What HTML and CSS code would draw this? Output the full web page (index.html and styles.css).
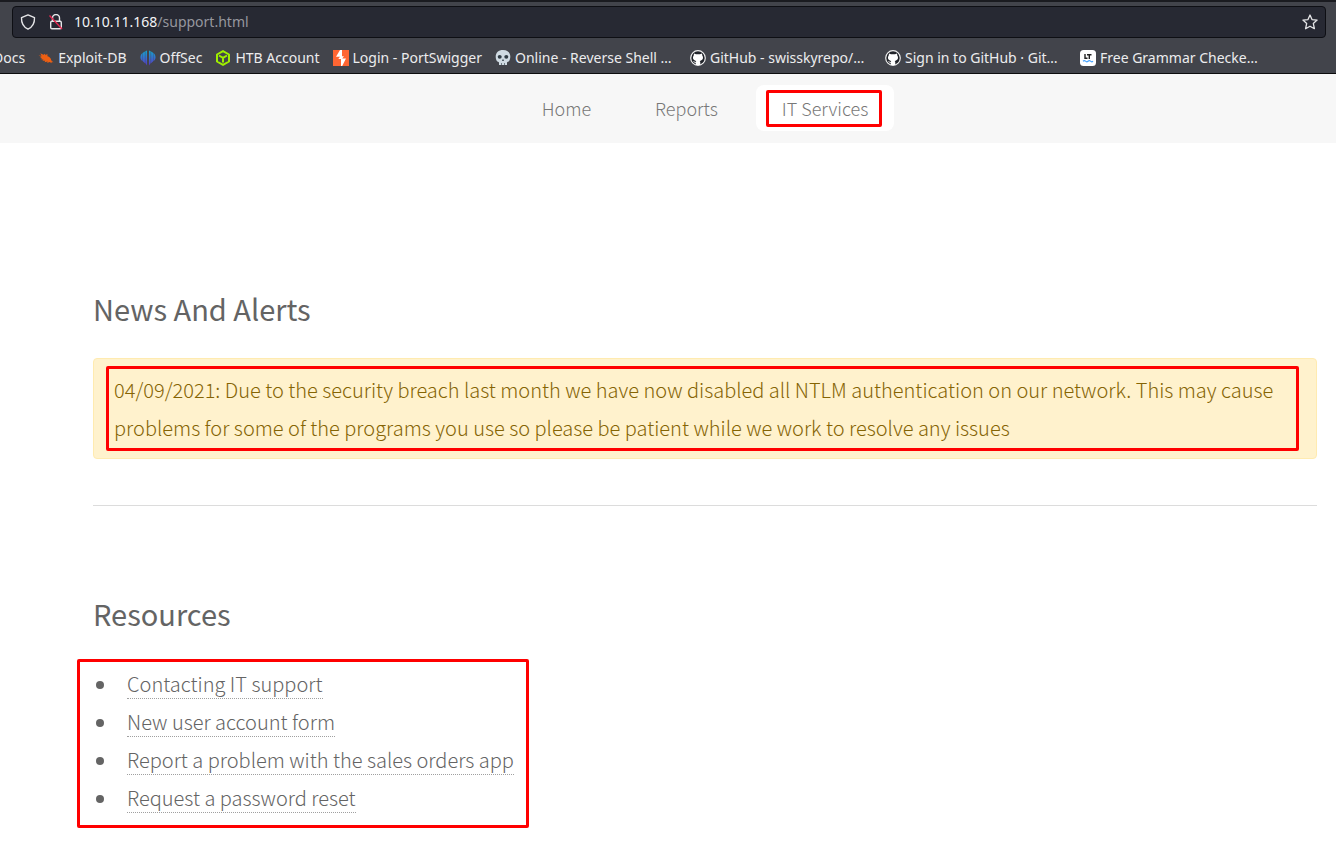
FILE: index.html
```html
<!DOCTYPE html>
<html lang="en">
<head>
<meta charset="utf-8">
<title>Support</title>
<link rel="stylesheet" href="styles.css">
</head>
<body>
<header class="browser">
  <div class="address">
    <svg class="icon" viewBox="0 0 16 16" fill="none" stroke="#e6e6e8" stroke-width="1.4" stroke-linejoin="round"><path d="M8 .9 14.5 3.600C14.700 8.600 12.500 13 8 15.200 3.500 13 1.300 8.600 1.500 3.600Z"/></svg>
    <svg class="icon lock" viewBox="0 0 16 16" fill="none" stroke="#e6e6e8" stroke-width="1.4"><path d="M4.500 7V4a3.500 3.500 0 0 1 7 0v3"/><rect x="2.700" y="7.200" width="10.600" height="7.600" rx="1.200"/><path d="M1.500 1.500 14 15" stroke="#e22850"/></svg>
    <label class="host" for="url">10.10.11.168</label>
    <input class="url" id="url" type="text" value="/support.html">
    <button class="star" type="button" aria-label="Bookmark this page"><svg class="icon" viewBox="0 0 16 16" fill="none" stroke="#e6e6e8" stroke-width="1.300" stroke-linejoin="round"><path d="m8 1 2 4.600 5.100.5-3.800 3.300 1.100 5.300L8 12.200l-4.400 2.500 1.100-5.300L.9 6.100 6 5.600Z"/></svg></button>
  </div>
  <nav class="bookmarks" aria-label="Bookmarks">
    <a href="#">Docs</a>
    <a href="#"><svg class="icon" viewBox="0 0 16 16" fill="#ee5f12"><path d="M.5 5.500 3.500 5.700 2.300 3.200 5.500 4.700 7 3.700l.6 1.500 1.700-1.400.2 2.400c2 .4 3.500 2 3.700 4l2.300 2.300-2.200-.7.7 1.500-2.500-1.200-2.300.8.5-1.300-3.200.6.8-1.400-3-.1 1.300-1L2.300 9l1.900-.6L2 7.300l1.800-.2Z"/></svg>Exploit-DB</a>
    <a href="#"><svg class="icon" viewBox="0 0 16 16"><defs><linearGradient id="off" gradientUnits="userSpaceOnUse" x1="0" y1="0" x2="0" y2="16"><stop stop-color="#10a9cf"/><stop offset="1" stop-color="#5b35c8"/></linearGradient></defs><g fill="url(#off)"><path d="M7 .5v15L5.300 13V1.300ZM4.900 1.600v11.600L2.600 11V3ZM2.300 3.200v7.800C-.3 8.900-.1 5.300 2.300 3.200Z"/><path d="M9 .5v15l1.700-2.500V1.300ZM11.100 1.600v11.600l2.300-2.200V3ZM13.700 3.200v7.800c2.600-2.100 2.400-5.700 0-7.800Z"/></g></svg>OffSec</a>
    <a href="#"><svg class="icon" viewBox="0 0 16 16" fill="none" stroke="#9fef00" stroke-width="2" stroke-linejoin="round"><path d="m8 1.100 6 3.400v7L8 14.900l-6-3.400v-7ZM4 5.500l4 2.300 4-2.300M8 7.800v4.700"/></svg>HTB Account</a>
    <a href="#"><svg class="icon" viewBox="0 0 16 16"><path fill="#ff6633" d="M0 0h16v16H0z"/><path fill="#fff" d="M9 0H7L3 6.700h4L5.300 9H8v7h1.200L13 8.600H9.200L11 6.200H9Z"/></svg>Login - PortSwigger</a>
    <a class="wide" href="#"><svg class="icon" viewBox="0 0 16 16"><path fill="#cfdae2" d="M8 0c4.500 0 7.300 2.700 7.300 6.500 0 2.100-.5 3.400-1.200 4.500-.5.900-1.600.6-2.100 1.400V15H4v-2.600c-.5-.8-1.600-.5-2.100-1.400C1.200 9.900.7 8.600.7 6.500.7 2.700 3.500 0 8 0Z"/><g fill="#303c45"><ellipse cx="4.700" cy="6.800" rx="2" ry="1.900"/><ellipse cx="11.300" cy="6.800" rx="2" ry="1.900"/><path d="M8 8.800 9 11H7ZM6.200 13h.6v2h-.6zM9.200 13h.6v2h-.6z"/></g></svg>Online - Reverse Shell …</a>
    <a class="wide" href="#"><svg class="icon" viewBox="0 0 16 16"><circle cx="8" cy="8" r="7.300" fill="#202329" stroke="#eee" stroke-width="1.200"/><path fill="#fff" d="M4 3.500 6 4.300h4l2-.8.3 2c1.800 3-.1 5-2.600 5.400.5.500.6 1 .6 1.800V15H5.700v-2.200c-1.500.3-2-.6-2.600-1.700 1 .2 1.300.9 2.600.8 0-.4.2-.7.600-1C3.800 10.500 1.900 8.500 3.700 5.500Z"/></svg>GitHub - swisskyrepo/…</a>
    <a class="wide" href="#"><svg class="icon" viewBox="0 0 16 16"><circle cx="8" cy="8" r="7.300" fill="#202329" stroke="#eee" stroke-width="1.200"/><path fill="#fff" d="M4 3.500 6 4.300h4l2-.8.3 2c1.800 3-.1 5-2.600 5.400.5.500.6 1 .6 1.800V15H5.700v-2.200c-1.500.3-2-.6-2.600-1.700 1 .2 1.300.9 2.600.8 0-.4.2-.7.600-1C3.800 10.500 1.900 8.500 3.700 5.500Z"/></svg>Sign in to GitHub · Git…</a>
    <a class="wide" href="#"><svg class="icon" viewBox="0 0 16 16"><rect width="16" height="16" rx="3.500" fill="#fff"/><path d="M5 4v4.300h2.500M7 4.700h4.500M9.300 4.700V9" fill="none" stroke="#222" stroke-width="1.400"/><path d="M3 11.200q1.300-1.200 2.500 0t2.500 0 2.500 0 2.500 0" fill="none" stroke="#45a1fc" stroke-width="1.200"/></svg>Free Grammar Checke…</a>
  </nav>
</header>
<nav class="menu" aria-label="Main">
  <a href="#">Home</a>
  <a href="#">Reports</a>
  <a class="current marked" href="#">IT Services</a>
</nav>
<main class="content">
  <section class="news">
    <h2>News And Alerts</h2>
    <p class="alert marked">04/09/2021: Due to the security breach last month we have now disabled all NTLM authentication on our network. This may cause problems for some of the programs you use so please be patient while we work to resolve any issues</p>
  </section>
  <section class="resources">
    <h2>Resources</h2>
    <ul class="links marked">
      <li><a href="#">Contacting IT support</a></li>
      <li><a href="#">New user account form</a></li>
      <li><a href="#">Report a problem with the sales orders app</a></li>
      <li><a href="#">Request a password reset</a></li>
    </ul>
  </section>
</main>
</body>
</html>
```
FILE: styles.css
```css
* { box-sizing: border-box; }
body {
  margin: 0;
  background: #fff;
  color: #646464;
  font: 300 20px/38px "Noto Sans CJK SC", "Open Sans", sans-serif;
  overflow-x: hidden;
}
a { color: inherit; text-decoration: none; }
.icon { width: 16px; height: 16px; flex: none; }

.browser {
  background: #42444b;
  border-top: 2px solid #1a1b20;
  border-bottom: 1px solid #0c0c0d;
  padding-top: 4px;
  font: 400 14px/20px "Noto Sans", sans-serif;
  color: #ececee;
}
.address {
  display: flex;
  align-items: center;
  height: 32px;
  margin: 0 10px 0 12px;
  padding: 0 7px;
  background: #272933;
  border: 1px solid #0e0f14;
  border-radius: 4px;
}
.lock { margin: 0 10px 0 12px; }
.host { color: #f4f4f6; }
.url {
  flex: 1;
  min-width: 0;
  padding: 0;
  border: 0;
  outline: 0;
  background: none;
  font: inherit;
  color: #96979e;
}
.star { display: flex; padding: 0; border: 0; background: none; }
.bookmarks {
  display: flex;
  gap: 13px;
  height: 35px;
  padding-top: 5px;
  margin-left: -7px;
  align-items: center;
  white-space: nowrap;
}
.bookmarks a { display: flex; align-items: center; gap: 4px; flex: none; }
.bookmarks .wide { width: 182px; }

.menu {
  display: flex;
  justify-content: center;
  gap: 12px;
  padding: 11px 0 12px 74px;
  background: #f7f7f7;
  font-size: 18px;
  line-height: 46px;
  color: #787878;
}
.menu a { padding: 0 26px; border-radius: 8px; }
.menu .current { background: #fff; }

.marked { position: relative; }
.marked::after {
  content: "";
  position: absolute;
  border: 3px solid #f00;
  border-radius: 2px;
  pointer-events: none;
}
.current::after { inset: 5px 12px 4px 10px; }
.alert::after { inset: 7px 17px 7px 12px; }
.links::after { inset: -6px -15px -11px -16px; }

.content { padding: 144px 19px 20px 93px; }
h2 { margin: 0 0 29px; font-size: 29px; font-weight: 400; line-height: 42px; }
.news { padding-bottom: 46px; border-bottom: 1px solid #dcdcdc; }
.alert {
  margin: 0;
  padding: 12px 20px 11px;
  background: #fff2cd;
  border: 1px solid #ffebb0;
  border-radius: 4px;
  color: #856404;
}
.resources { padding-top: 86px; }
.resources h2 { margin-bottom: 31px; }
.links {
  width: fit-content;
  margin: 0;
  padding: 0 0 0 3px;
  list-style: none;
}
.links li::before {
  content: "";
  display: inline-block;
  width: 8px;
  height: 8px;
  margin-right: 23px;
  border-radius: 50%;
  background: #646464;
  vertical-align: 3px;
}
.links a { border-bottom: 1px dotted #a0a0a0; }
```
